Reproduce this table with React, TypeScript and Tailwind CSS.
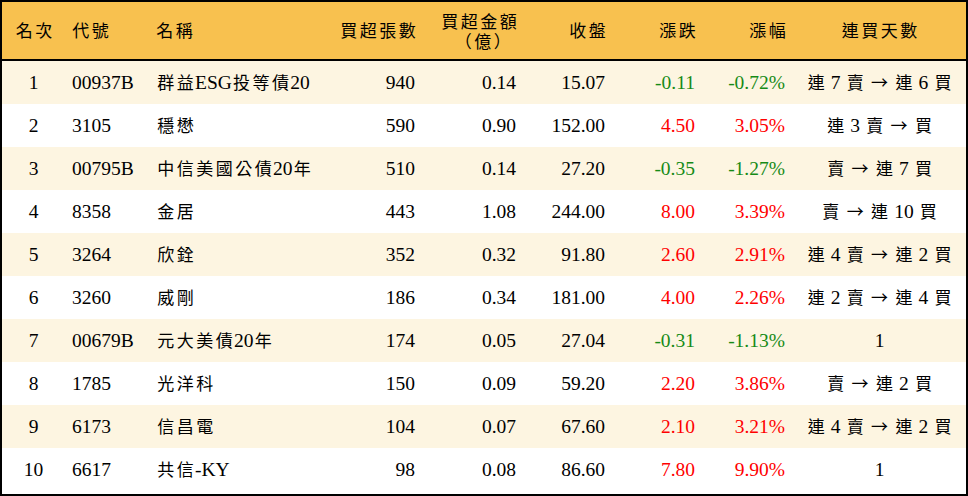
import React from "react";

const GRID =
  "grid grid-cols-[63px_84px_181px_93px_101px_89px_90px_90px_173px]";

const isCJK = (c: string) => /[\u3000-\u9fff\uff00-\uffef]/.test(c);

function T({ s }: { s: string }) {
  const parts: React.ReactNode[] = [];
  let buf = "";
  const chars = Array.from(s);
  const flush = (i: number) => {
    if (buf) {
      parts.push(<span key={"l" + i}>{buf}</span>);
      buf = "";
    }
  };
  chars.forEach((c, i) => {
    if (isCJK(c)) {
      flush(i);
      parts.push(
        <span
          key={"c" + i}
          className="inline-block w-[19.5px] text-center text-[17px] leading-[19.5px] font-['Noto_Sans_CJK_TC',sans-serif]"
        >
          {c}
        </span>
      );
    } else if (c === "→") {
      flush(i);
      parts.push(
        <span
          key={"a" + i}
          className="inline-block w-[19.5px] text-center text-[17px] leading-[19.5px] font-['Noto_Sans_CJK_TC',sans-serif]"
        >
          {c}
        </span>
      );
    } else {
      buf += c;
    }
  });
  flush(chars.length);
  return <>{parts}</>;
}

type Row = {
  rank: string;
  code: string;
  name: string;
  qty: string;
  amt: string;
  close: string;
  chg: string;
  pct: string;
  days: string;
  up: boolean;
};

const rows: Row[] = [
  { rank: "1", code: "00937B", name: "群益ESG投等債20", qty: "940", amt: "0.14", close: "15.07", chg: "-0.11", pct: "-0.72%", days: "連 7 賣 → 連 6 買", up: false },
  { rank: "2", code: "3105", name: "穩懋", qty: "590", amt: "0.90", close: "152.00", chg: "4.50", pct: "3.05%", days: "連 3 賣 → 買", up: true },
  { rank: "3", code: "00795B", name: "中信美國公債20年", qty: "510", amt: "0.14", close: "27.20", chg: "-0.35", pct: "-1.27%", days: "賣 → 連 7 買", up: false },
  { rank: "4", code: "8358", name: "金居", qty: "443", amt: "1.08", close: "244.00", chg: "8.00", pct: "3.39%", days: "賣 → 連 10 買", up: true },
  { rank: "5", code: "3264", name: "欣銓", qty: "352", amt: "0.32", close: "91.80", chg: "2.60", pct: "2.91%", days: "連 4 賣 → 連 2 買", up: true },
  { rank: "6", code: "3260", name: "威剛", qty: "186", amt: "0.34", close: "181.00", chg: "4.00", pct: "2.26%", days: "連 2 賣 → 連 4 買", up: true },
  { rank: "7", code: "00679B", name: "元大美債20年", qty: "174", amt: "0.05", close: "27.04", chg: "-0.31", pct: "-1.13%", days: "1", up: false },
  { rank: "8", code: "1785", name: "光洋科", qty: "150", amt: "0.09", close: "59.20", chg: "2.20", pct: "3.86%", days: "賣 → 連 2 買", up: true },
  { rank: "9", code: "6173", name: "信昌電", qty: "104", amt: "0.07", close: "67.60", chg: "2.10", pct: "3.21%", days: "連 4 賣 → 連 2 買", up: true },
  { rank: "10", code: "6617", name: "共信-KY", qty: "98", amt: "0.08", close: "86.60", chg: "7.80", pct: "9.90%", days: "1", up: true },
];

export default function App() {
  return (
    <div className="w-[968px] h-[496px] bg-white font-['Liberation_Serif','Noto_Sans_CJK_TC',serif] text-[19.5px] text-black">
      <div className="flex flex-col w-full h-full border-2 border-black">
        <div
          className={`${GRID} h-[59px] shrink-0 items-center bg-[#f8c14f] border-b-2 border-black leading-[19.5px]`}
        >
          <div className="text-center pl-[1px]">
            <T s="名次" />
          </div>
          <div className="pl-[6px]">
            <T s="代號" />
          </div>
          <div className="pl-[6px]">
            <T s="名稱" />
          </div>
          <div className="text-right pr-[6px]">
            <T s="買超張數" />
          </div>
          <div className="pr-[6px] flex flex-col items-end gap-0">
            <div className="h-[19.5px]">
              <T s="買超金額" />
            </div>
            <div className="h-[19.5px] pr-[6px]">
              <T s="（億）" />
            </div>
          </div>
          <div className="text-right pr-[6px]">
            <T s="收盤" />
          </div>
          <div className="text-right pr-[6px]">
            <T s="漲跌" />
          </div>
          <div className="text-right pr-[6px]">
            <T s="漲幅" />
          </div>
          <div className="text-center">
            <T s="連買天數" />
          </div>
        </div>
        {rows.map((r, i) => {
          const color = r.up ? "text-[#ff0000]" : "text-[#168a16]";
          return (
            <div
              key={r.rank}
              className={`${GRID} h-[43px] shrink-0 items-center ${
                i % 2 === 0 ? "bg-[#fdf5e1]" : "bg-white"
              }`}
            >
              <div className="text-center">{r.rank}</div>
              <div className="pl-[7px]">{r.code}</div>
              <div className="pl-[7px] whitespace-nowrap">
                <T s={r.name} />
              </div>
              <div className="text-right pr-[8px]">{r.qty}</div>
              <div className="text-right pr-[8px]">{r.amt}</div>
              <div className="text-right pr-[8px]">{r.close}</div>
              <div className={`text-right pr-[8px] ${color}`}>{r.chg}</div>
              <div className={`text-right pr-[8px] ${color}`}>{r.pct}</div>
              <div className="text-center whitespace-nowrap">
                <T s={r.days} />
              </div>
            </div>
          );
        })}
      </div>
    </div>
  );
}
